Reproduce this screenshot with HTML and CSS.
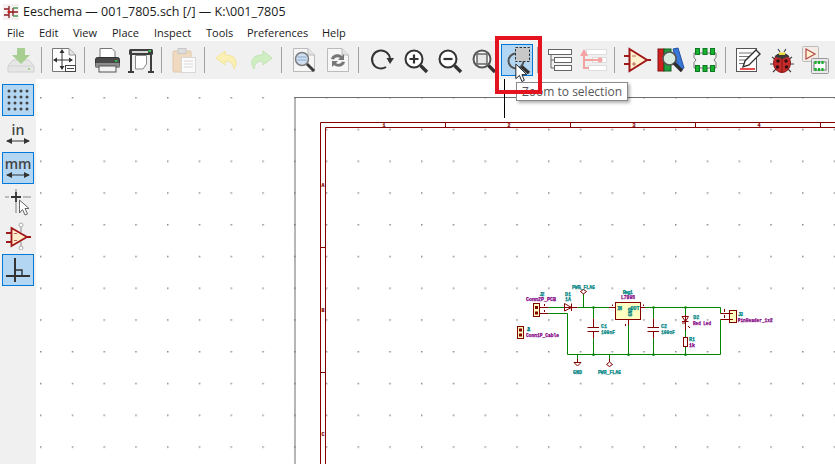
FILE: index.html
```html
<!DOCTYPE html>
<html>
<head>
	<meta charset="UTF-8">
	<title>Eeschema</title>
	<link rel="stylesheet" href="styles.css">
</head>

<body>
<div class="window">
	<div class="titlebar">
		<svg class="appicon" width="16" height="16" viewBox="0 0 16 16">
			<rect x="0" y="0" width="16" height="16" fill="#f6f0f0"/>
			<path d="M6 2V14M6 5H1M6 11H1M6 8H15M10 4V12" stroke="#8a1c1c" stroke-width="1.300" fill="none"/>
			<path d="M10 4H15M10 12H15" stroke="#4c9a56" stroke-width="1.300"/>
			<circle cx="6" cy="8" r="1.600" fill="#c02020"/>
		</svg>
		<span>Eeschema — 001_7805.sch [/] — K:\001_7805</span>
	</div>

	<div class="menubar">
		<span class="menu">File</span>
		<span class="menu">Edit</span>
		<span class="menu">View</span>
		<span class="menu">Place</span>
		<span class="menu">Inspect</span>
		<span class="menu">Tools</span>
		<span class="menu">Preferences</span>
		<span class="menu">Help</span>
	</div>

	<div class="toolbar">
		<!-- save -->
		<div class="tool"><svg width="28" height="28" viewBox="0 0 28 28">
			<path d="M6 14L1 20V26H27V20L22 14Z" fill="#e6e6e6" stroke="#d0d0d0"/>
			<path d="M1 20H27" stroke="#d4d4d4"/>
			<path d="M10 2H18V9H23L14 18L5 9H10Z" fill="#a8cf92"/>
			<rect x="21" y="22" width="2" height="2" fill="#a8cf92"/>
		</svg></div>
		<div class="sep"></div>
		<!-- page settings -->
		<div class="tool"><svg width="28" height="28" viewBox="0 0 28 28">
			<path d="M2.500 2.500H19L25.500 9V25.500H2.500Z" fill="#fff" stroke="#777"/>
			<path d="M19 2.500V9H25.500" fill="#e4e4e4" stroke="#999"/>
			<path d="M12 4V23M4 14H22" stroke="#333"/>
			<path d="M12 3L9.500 7H14.500ZM12 24L9.500 20H14.500ZM3 14L7 11.500V16.500ZM23 14L19 11.500V16.500Z" fill="#333"/>
			<rect x="15.500" y="19.500" width="10" height="6" fill="#fff" stroke="#444"/>
			<path d="M17 22.500H24" stroke="#444"/>
		</svg></div>
		<div class="sep"></div>
		<!-- print -->
		<div class="tool"><svg width="28" height="28" viewBox="0 0 28 28">
			<path d="M7 2.500H19L22 5.500V12H7Z" fill="#fff" stroke="#777"/>
			<rect x="2.500" y="11.500" width="24" height="10" rx="2" fill="#4a4a4a" stroke="#333"/>
			<rect x="2.500" y="17" width="24" height="5" fill="#8c8c8c"/>
			<rect x="6" y="20" width="17" height="6" fill="#f2f2f2" stroke="#555"/>
			<rect x="22" y="14" width="2.500" height="2" fill="#2fb04a"/>
		</svg></div>
		<!-- plotter -->
		<div class="tool"><svg width="28" height="28" viewBox="0 0 28 28">
			<rect x="2" y="3" width="24" height="6" rx="1.500" fill="#3e3e3e"/>
			<rect x="5" y="5" width="16" height="2" fill="#d8d8d8"/>
			<rect x="21.500" y="4" width="2.500" height="2" fill="#35c04f"/>
			<path d="M4 9V25M24 9V25" stroke="#3e3e3e" stroke-width="2"/>
			<path d="M1 26H7M21 26H27" stroke="#3e3e3e" stroke-width="2"/>
			<path d="M8.500 9.500H19.500V18L16 23H8.500Z" fill="#fff" stroke="#888"/>
		</svg></div>
		<div class="sep"></div>
		<!-- paste -->
		<div class="tool"><svg width="28" height="28" viewBox="0 0 28 28">
			<rect x="3" y="5" width="18" height="21" rx="1" fill="#efd9bf" stroke="#e0c8ac"/>
			<rect x="8" y="2.500" width="8" height="5" fill="#dedede" stroke="#c8c8c8"/>
			<rect x="11.500" y="11.500" width="14" height="15" fill="#fbfbfb" stroke="#d8d8d8"/>
			<path d="M14 15H23M14 18H23M14 21H23" stroke="#d8d8d8"/>
		</svg></div>
		<div class="sep"></div>
		<!-- undo -->
		<div class="tool"><svg width="28" height="28" viewBox="0 0 28 28">
			<path d="M12 5L3 12L12 19V15C17 15 20 16 21 23C25 17 24 9 12 9Z" fill="#fbf0b4" stroke="#f2e49a"/>
		</svg></div>
		<!-- redo -->
		<div class="tool"><svg width="28" height="28" viewBox="0 0 28 28">
			<path d="M16 5L25 12L16 19V15C11 15 8 16 7 23C3 17 4 9 16 9Z" fill="#cfeec2" stroke="#bfe3b0"/>
		</svg></div>
		<div class="sep"></div>
		<!-- find -->
		<div class="tool"><svg width="28" height="28" viewBox="0 0 28 28">
			<path d="M3.500 2.500H18L24.500 9V25.500H3.500Z" fill="#f6f6f6" stroke="#bbb"/>
			<path d="M18 2.500V9H24.500" fill="#e4e4e4" stroke="#bbb"/>
			<circle cx="12" cy="13" r="6.500" fill="#cfe0f2" stroke="#7d7d7d" stroke-width="1.500"/>
			<path d="M7.500 11H16.500M7.500 14H16.500" stroke="#8aa6c8"/>
			<path d="M17 18L24 25" stroke="#3c3c3c" stroke-width="3"/>
		</svg></div>
		<!-- find and replace -->
		<div class="tool"><svg width="28" height="28" viewBox="0 0 28 28">
			<path d="M3.500 2.500H18L24.500 9V25.500H3.500Z" fill="#f6f6f6" stroke="#bbb"/>
			<path d="M18 2.500V9H24.500" fill="#e4e4e4" stroke="#bbb"/>
			<path d="M7 13C8 8 15 7 18 10L20 8V14H14L16 12C14 10.500 11 11 10 13.500Z" fill="#777"/>
			<path d="M21 16C20 21 13 22 10 19L8 21V15H14L12 17C14 18.500 17 18 18 15.500Z" fill="#777"/>
		</svg></div>
		<div class="sep"></div>
		<!-- redraw -->
		<div class="tool"><svg width="28" height="28" viewBox="0 0 28 28">
			<path d="M19 21A9 9 0 1 1 23 13" fill="none" stroke="#333" stroke-width="2"/>
			<path d="M19.500 12H27L23 18Z" fill="#333"/>
		</svg></div>
		<!-- zoom in -->
		<div class="tool"><svg width="28" height="28" viewBox="0 0 28 28">
			<circle cx="13" cy="13" r="8.500" fill="#fff" stroke="#333" stroke-width="2"/>
			<path d="M8.500 13H17.500M13 8.500V17.500" stroke="#333" stroke-width="2.200"/>
			<path d="M19.500 19.500L26 26" stroke="#333" stroke-width="3.400"/>
		</svg></div>
		<!-- zoom out -->
		<div class="tool"><svg width="28" height="28" viewBox="0 0 28 28">
			<circle cx="13" cy="13" r="8.500" fill="#fff" stroke="#333" stroke-width="2"/>
			<path d="M8.500 13H17.500" stroke="#333" stroke-width="2.200"/>
			<path d="M19.500 19.500L26 26" stroke="#333" stroke-width="3.400"/>
		</svg></div>
		<!-- zoom fit -->
		<div class="tool"><svg width="28" height="28" viewBox="0 0 28 28">
			<circle cx="13" cy="13" r="8.500" fill="#fff" stroke="#555" stroke-width="2"/>
			<rect x="8" y="8" width="10" height="10" fill="#e8e8e8" stroke="#666" stroke-width="1.500"/>
			<path d="M19.500 19.500L26 26" stroke="#333" stroke-width="3.400"/>
		</svg></div>
		<!-- zoom to selection -->
		<div class="tool tool-on"><svg width="28" height="28" viewBox="0 0 28 28">
			<circle cx="13" cy="15" r="7.500" fill="none" stroke="#555" stroke-width="2"/>
			<rect x="12.500" y="1.500" width="14" height="14" fill="#c8c8c8" stroke="#333" stroke-dasharray="2.500 1.500"/>
			<path d="M18.500 20.500L26 27" stroke="#333" stroke-width="3.400"/>
		</svg></div>
		<div class="sep"></div>
		<!-- hierarchy -->
		<div class="tool"><svg width="28" height="28" viewBox="0 0 28 28">
			<rect x="2.500" y="3.500" width="23" height="5" fill="#fff" stroke="#666"/>
			<rect x="8.500" y="11.500" width="17" height="5" fill="#fff" stroke="#666"/>
			<rect x="8.500" y="19.500" width="17" height="5" fill="#fff" stroke="#666"/>
			<path d="M5 9V22H9M5 14H9" fill="none" stroke="#666"/>
		</svg></div>
		<!-- leave sheet -->
		<div class="tool"><svg width="28" height="28" viewBox="0 0 28 28">
			<rect x="6.500" y="3.500" width="20" height="5" fill="#fff" stroke="#ddd"/>
			<rect x="12.500" y="11.500" width="14" height="5" fill="#fff" stroke="#ddd"/>
			<rect x="8.500" y="19.500" width="18" height="5" fill="#fff" stroke="#ddd"/>
			<path d="M4 4V14H21M4 14V22H9" fill="none" stroke="#f4a3a3" stroke-width="2"/>
			<path d="M4 3L0 10H8Z" fill="#f4a3a3"/>
			<circle cx="20" cy="14" r="2.500" fill="#f4a3a3"/>
		</svg></div>
		<div class="sep"></div>
		<!-- symbol editor -->
		<div class="tool"><svg width="28" height="28" viewBox="0 0 28 28">
			<path d="M6.500 3L24 14L6.500 25Z" fill="#fff3cf" stroke="#a01818" stroke-width="2"/>
			<path d="M1 10H6M1 18H6M24 14H28" stroke="#a01818" stroke-width="2"/>
			<path d="M9 10H13M9 18H13M11 16V20" stroke="#c06060"/>
		</svg></div>
		<!-- library browser -->
		<div class="tool"><svg width="28" height="28" viewBox="0 0 28 28">
			<rect x="1" y="3" width="6" height="22" fill="#d02020" stroke="#801010"/>
			<rect x="7" y="3" width="7" height="22" fill="#20a040" stroke="#106020"/>
			<path d="M16 3L21 2L27 22L22 24Z" fill="#3878d8" stroke="#2050a0"/>
			<circle cx="12.500" cy="12.500" r="6.500" fill="#d8ece0" stroke="#555" stroke-width="1.500"/>
			<path d="M17 17L25 25" stroke="#2e2e2e" stroke-width="3.400"/>
		</svg></div>
		<!-- footprint editor -->
		<div class="tool"><svg width="28" height="28" viewBox="0 0 28 28">
			<path d="M3 7H25V11.500L23 14L25 16.500V22H3V16.500L5 14L3 11.500Z" fill="#f4f4f4" stroke="#777"/>
			<g fill="#18b030" stroke="#0c7a1e">
				<rect x="4.500" y="2.500" width="4" height="6"/>
				<rect x="12" y="2.500" width="4" height="6"/>
				<rect x="19.500" y="2.500" width="4" height="6"/>
				<rect x="4.500" y="19.500" width="4" height="6"/>
				<rect x="12" y="19.500" width="4" height="6"/>
				<rect x="19.500" y="19.500" width="4" height="6"/>
			</g>
		</svg></div>
		<div class="sep"></div>
		<!-- schematic fields / notes -->
		<div class="tool"><svg width="28" height="28" viewBox="0 0 28 28">
			<rect x="2.500" y="2.500" width="20" height="23" fill="#fff" stroke="#555"/>
			<path d="M5 7H18M5 10.500H16M5 14H14M5 17.500H11" stroke="#777"/>
			<path d="M6 23H21" stroke="#e01010" stroke-width="1.500"/>
			<path d="M9 21L11 15L22 4L26 8L15 19Z" fill="#fff" stroke="#333" stroke-width="1.400"/>
		</svg></div>
		<!-- erc bug -->
		<div class="tool"><svg width="28" height="28" viewBox="0 0 28 28">
			<path d="M4 11L8 14M24 11L20 14M2 18H7M26 18H21M5 26L9 22M23 26L19 22M10 3L12 6M18 3L16 6" stroke="#444" stroke-width="1.200"/>
			<ellipse cx="14" cy="17" rx="8.500" ry="9.500" fill="#c62a2a" stroke="#8a1818"/>
			<path d="M6.500 10.500C9 6 19 6 21.500 10.500L14 13Z" fill="#3a3a3a"/>
			<rect x="11" y="6.500" width="6" height="2.500" fill="#e8d838"/>
			<path d="M14 12V26.500" stroke="#7a1414"/>
			<g fill="#301010"><circle cx="10" cy="15" r="1.800"/><circle cx="18" cy="15" r="1.800"/><circle cx="9.500" cy="21" r="1.800"/><circle cx="18.500" cy="21" r="1.800"/></g>
		</svg></div>
		<!-- symbol to footprint -->
		<div class="tool"><svg width="28" height="28" viewBox="0 0 28 28">
			<rect x="0.500" y="0.500" width="16" height="15" rx="1" fill="#f4ece4" stroke="#bbb"/>
			<path d="M4 3L13 8L4 13Z" fill="#fff3cf" stroke="#b04848" stroke-width="1.200"/>
			<rect x="9.500" y="12.500" width="17" height="15" rx="1" fill="#e8e8e8" stroke="#999"/>
			<rect x="12" y="16" width="12" height="8" fill="#fff" stroke="#777"/>
			<path d="M13.500 15V18M17 15V18M20.500 15V18M13.500 22V25M17 22V25M20.500 22V25" stroke="#18b030" stroke-width="2.200"/>
		</svg></div>
	</div>

	<div class="workspace">
		<div class="sidebar">
			<div class="tool tool-on"><svg width="28" height="28" viewBox="0 0 28 28">
				<g fill="#444">
					<circle cx="5" cy="5" r="1.500"/><circle cx="11" cy="5" r="1.500"/><circle cx="17" cy="5" r="1.500"/><circle cx="23" cy="5" r="1.500"/>
					<circle cx="5" cy="11" r="1.500"/><circle cx="11" cy="11" r="1.500"/><circle cx="17" cy="11" r="1.500"/><circle cx="23" cy="11" r="1.500"/>
					<circle cx="5" cy="17" r="1.500"/><circle cx="11" cy="17" r="1.500"/><circle cx="17" cy="17" r="1.500"/><circle cx="23" cy="17" r="1.500"/>
					<circle cx="5" cy="23" r="1.500"/><circle cx="11" cy="23" r="1.500"/><circle cx="17" cy="23" r="1.500"/><circle cx="23" cy="23" r="1.500"/>
				</g>
			</svg></div>
			<div class="tool"><svg width="28" height="28" viewBox="0 0 28 28">
				<text class="unit" x="14" y="15" text-anchor="middle">in</text>
				<path d="M3 21H25" stroke="#333"/>
				<path d="M2 21L8 18V24ZM26 21L20 18V24Z" fill="#333"/>
			</svg></div>
			<div class="tool tool-on"><svg width="28" height="28" viewBox="0 0 28 28">
				<text class="unit" x="14" y="15" text-anchor="middle">mm</text>
				<path d="M3 21H25" stroke="#333"/>
				<path d="M2 21L8 18V24ZM26 21L20 18V24Z" fill="#333"/>
			</svg></div>
			<div class="tool"><svg width="28" height="28" viewBox="0 0 28 28">
				<path d="M12 1V5M1 9H5M19 9H27M12 13V25" stroke="#aaa" stroke-width="1.600"/>
				<path d="M12 4V14M7 9H17" stroke="#333" stroke-width="1.800"/>
				<path d="M15.500 12V25L18.500 21.500L21 27L23.500 26L21 20.500H25Z" fill="#fff" stroke="#666"/>
			</svg></div>
			<div class="tool"><svg width="28" height="28" viewBox="0 0 28 28">
				<path d="M7.500 6L23 15L7.500 24Z" fill="#ffeccb" stroke="#a01818" stroke-width="1.800"/>
				<path d="M2 11H7M2 20H7M23 15H27" stroke="#a01818" stroke-width="1.800"/>
				<path d="M10 11.500H13M10 18.500H13" stroke="#c06060"/>
				<path d="M17 4V10M17 20V27" stroke="#aaa" stroke-width="1.400"/>
				<circle cx="17" cy="3" r="2" fill="#fff" stroke="#aaa"/>
				<circle cx="17" cy="26" r="2" fill="#fff" stroke="#aaa"/>
			</svg></div>
			<div class="tool tool-on"><svg width="28" height="28" viewBox="0 0 28 28">
				<path d="M11 2V26M2 20H26" stroke="#333" stroke-width="2"/>
				<path d="M11 14H18V20" fill="none" stroke="#333" stroke-width="1.400"/>
			</svg></div>
		</div>

		<div class="canvas">
			<svg class="sheet" width="799" height="385" viewBox="36 79 799 385">
				<defs>
					<pattern id="grid" patternUnits="userSpaceOnUse" x="40" y="97" width="31.75" height="31.75">
						<rect width="1.500" height="1.500" fill="#8a8a8a"/>
					</pattern>
				</defs>
				<rect x="36" y="79" width="799" height="385" fill="url(#grid)"/>

				<!-- drawing sheet -->
				<path class="page" d="M295 464V97.500H835"/>
				<path class="frame" d="M320.500 464V122.500H835M325.500 464V127.500H835"/>
				<path class="tick" d="M445.500 122V127M570.500 122V127M695.500 122V127M820.500 122V127M321 247.500H326M321 372.500H326"/>
				<text class="frametext" x="384" y="126.500" text-anchor="middle">1</text>
				<text class="frametext" x="509" y="126.500" text-anchor="middle">2</text>
				<text class="frametext" x="634" y="126.500" text-anchor="middle">3</text>
				<text class="frametext" x="759" y="126.500" text-anchor="middle">4</text>
				<text class="frametext" x="323" y="187" text-anchor="middle">A</text>
				<text class="frametext" x="323" y="312" text-anchor="middle">B</text>
				<text class="frametext" x="323" y="436" text-anchor="middle">C</text>

				<!-- wires -->
				<path class="wire" d="M548.500 307.500H564.500M577.500 307.500H615M583.500 307.500V293.500M548.500 313.500H567.500V354.500H720.500V319.500M640.500 307.500H720.500V313.500"/>
				<path class="wire" d="M593.500 307.500V318.500M593.500 338.500V354.500M653.500 307.500V318.500M653.500 338.500V354.500M685.500 307.500V315M685.500 330V337.500M685.500 346.500V354.500M628.500 325V354.500M577.500 354.500V359M609.500 354.500V359"/>
				<g class="dots">
					<circle cx="593.500" cy="307.500" r="1.300"/><circle cx="653.500" cy="307.500" r="1.300"/><circle cx="685.500" cy="307.500" r="1.300"/>
					<circle cx="593.500" cy="354.800" r="1.300"/><circle cx="628.500" cy="354.800" r="1.300"/><circle cx="653.500" cy="354.800" r="1.300"/><circle cx="685.500" cy="354.800" r="1.300"/>
				</g>

				<!-- J2 -->
				<rect class="body" x="533.500" y="303.500" width="6" height="13"/>
				<rect class="pad" x="535" y="306" width="3" height="3"/>
				<rect class="pad" x="535" y="311.500" width="3" height="3"/>
				<path class="pin" d="M539 307.500H548.500M539 313.500H548.500M544.500 306V304M544.500 312V310"/>
				<text class="ref" x="539.500" y="295.500" textLength="5">J2</text>
				<text class="val" x="526" y="301" textLength="30" lengthAdjust="spacingAndGlyphs">Conn2P_PCB</text>

				<!-- J1 -->
				<rect class="body" x="517.500" y="326.500" width="6" height="12"/>
				<rect class="pad" x="519" y="328.500" width="3" height="3"/>
				<rect class="pad" x="519" y="333.500" width="3" height="3"/>
				<text class="ref" x="526.500" y="331" textLength="4">J1</text>
				<text class="val" x="526" y="337" textLength="33" lengthAdjust="spacingAndGlyphs">Conn1P_Cable</text>

				<!-- D1 -->
				<path class="pin" d="M564.500 307.500H577.500M571.500 303.500V311"/>
				<path class="part" d="M564.500 303.500V311L571.500 307.500Z"/>
				<text class="ref" x="565" y="295.500" textLength="6">D1</text>
				<text class="ref" x="565" y="301" textLength="6">1A</text>

				<!-- PWR_FLAG top -->
				<path class="part" d="M583.500 294L580.500 291.500L583.500 289.500L586.500 291.500Z"/>
				<text class="ref" x="572" y="288.500" textLength="23" lengthAdjust="spacingAndGlyphs">PWR_FLAG</text>

				<!-- C1 -->
				<path class="pin" d="M593.500 318.500V327.500M593.500 331.500V338.500"/>
				<path class="plate" d="M587.500 327.500H599M587.500 331.500H599"/>
				<text class="ref" x="601" y="327.500" textLength="6">C1</text>
				<text class="ref" x="601" y="334" textLength="14" lengthAdjust="spacingAndGlyphs">100nF</text>

				<!-- regulator -->
				<rect class="body" x="615.500" y="302.500" width="25" height="17"/>
				<path class="pin" d="M609 307.500H615.500M640.500 307.500H645M628.500 319.700V325M612.500 304.500V306M643.500 304.500V306M625.500 324V326"/>
				<text class="ref" x="617" y="310" textLength="5">IN</text>
				<text class="ref" x="630.500" y="310" textLength="9">OUT</text>
				<text class="ref" x="630" y="318" text-anchor="middle" transform="rotate(-90 628 314)">GND</text>
				<text class="ref" x="622.700" y="293.500" textLength="10">Reg1</text>
				<text class="val" x="621" y="299" textLength="14" lengthAdjust="spacingAndGlyphs">L7805</text>

				<!-- C2 -->
				<path class="pin" d="M653.500 318.500V327.500M653.500 331.500V338.500"/>
				<path class="plate" d="M647.500 327.500H659M647.500 331.500H659"/>
				<text class="ref" x="661" y="327.500" textLength="6">C2</text>
				<text class="ref" x="661" y="334" textLength="14" lengthAdjust="spacingAndGlyphs">100nF</text>

				<!-- D2 and R1 -->
				<path class="pin" d="M685.500 315V330M682 323L685.500 323M688 326L690 328"/>
				<path class="part" d="M682 316.500H688.500L685.500 321.500ZM682 321.500H688.500"/>
				<rect class="part" x="683.500" y="337.500" width="4" height="9"/>
				<text class="ref" x="693.300" y="319" textLength="6">D2</text>
				<text class="val" x="693" y="325" textLength="18" lengthAdjust="spacingAndGlyphs">Red Led</text>
				<text class="ref" x="689" y="340.500" textLength="6">R1</text>
				<text class="val" x="689" y="346.500" textLength="6">1k</text>

				<!-- J3 -->
				<rect class="body" x="729.500" y="310.500" width="7" height="12"/>
				<path class="pin" d="M720.500 313.500H733M720.500 319.500H733M724.500 309V312M724.500 315V318"/>
				<text class="ref" x="738" y="316" textLength="5">J3</text>
				<text class="val" x="737.700" y="321.500" textLength="35" lengthAdjust="spacingAndGlyphs">PinHeader_1x2</text>

				<!-- power symbols -->
				<path class="pin" d="M577.500 359V362M609.500 359V362"/>
				<path class="part" d="M574 362.500H581L577.500 366Z"/>
				<path class="part" d="M609.500 362L606.500 364.500L609.500 366.500L612.500 364.500Z"/>
				<text class="ref" x="573" y="373.500" textLength="9">GND</text>
				<text class="ref" x="598" y="373.500" textLength="23" lengthAdjust="spacingAndGlyphs">PWR_FLAG</text>

				<!-- crosshair -->
				<path class="cross" d="M504.500 79V118"/>
			</svg>
		</div>
	</div>

	<!-- things lying over the window -->
	<div class="tooltip">Zoom to selection</div>
	<div class="callout"></div>
	<svg class="pointer" width="13" height="20" viewBox="0 0 16 24">
		<path d="M1 1V19L5.500 15L8.500 22.500L11.500 21L8.500 14H14.500Z" fill="#fff" stroke="#222" stroke-width="1.200"/>
	</svg>
</div>
</body>
</html>
```

FILE: styles.css
```css
html, body {
	margin: 0;
	padding: 0;
	background: #fff;
}
.window {
	position: relative;
	width: 835px;
	height: 464px;
	overflow: hidden;
	display: flex;
	flex-direction: column;
	font-family: "Open Sans", "Noto Sans", sans-serif;
	font-size: 11px;
	color: #1a1a1a;
}
.titlebar {
	height: 23px;
	display: flex;
	align-items: center;
	gap: 4px;
	padding-left: 3px;
	font-size: 12.5px;
	white-space: nowrap;
}
.menubar {
	height: 18px;
	display: flex;
	align-items: center;
	padding-left: 7px;
}
.menu:nth-child(1) { width: 32px; }
.menu:nth-child(2) { width: 34px; }
.menu:nth-child(3) { width: 39px; }
.menu:nth-child(4) { width: 42px; }
.menu:nth-child(5) { width: 52px; }
.menu:nth-child(6) { width: 41px; }
.menu:nth-child(7) { width: 75px; }

.toolbar {
	height: 38px;
	box-sizing: border-box;
	background: #f0f0f0;
	display: flex;
	align-items: center;
	padding-left: 5px;
}
.tool {
	box-sizing: border-box;
	width: 32px;
	height: 32px;
	margin-right: 2px;
	flex: none;
	display: flex;
	align-items: center;
	justify-content: center;
	border: 1px solid transparent;
}
.tool-on {
	background: #b3d7f3;
	border-color: #0078d7;
}
.sep {
	flex: none;
	width: 1px;
	height: 26px;
	margin: 0 6px 0 2px;
	background: #a0a0a0;
}

.workspace {
	flex: 1;
	display: flex;
	min-height: 0;
}
.sidebar {
	width: 36px;
	flex: none;
	box-sizing: border-box;
	background: #f0f0f0;
	padding: 5px 0 0 2px;
	display: flex;
	flex-direction: column;
	gap: 2px;
}
.sidebar .tool {
	margin-right: 0;
}
.unit {
	font-family: "Open Sans", sans-serif;
	font-size: 14px;
	font-weight: 600;
	fill: #444;
}
.canvas {
	flex: 1;
	min-width: 0;
	background: #fff;
}
.sheet {
	display: block;
}

.page { fill: none; stroke: #6e6e6e; stroke-width: 1; }
.frame { fill: none; stroke: #840000; stroke-width: 1; }
.tick { fill: none; stroke: #840000; stroke-width: 1; }
.frametext { font-family: "Liberation Mono", monospace; font-size: 5px; font-weight: bold; fill: #840000; stroke: #840000; stroke-width: 0.2; }
.wire { fill: none; stroke: #008400; stroke-width: 1; }
.dots { fill: #008400; }
.pin { fill: none; stroke: #840000; stroke-width: 1; }
.plate { fill: none; stroke: #840000; stroke-width: 1; }
.part { fill: none; stroke: #840000; stroke-width: 1; }
.body { fill: #ffffc2; stroke: #840000; stroke-width: 1; }
.pad { fill: #840000; }
.ref { font-family: "Liberation Mono", monospace; font-size: 5px; font-weight: bold; fill: #008484; stroke: #008484; stroke-width: 0.25; }
.val { font-family: "Liberation Mono", monospace; font-size: 5px; font-weight: bold; fill: #840084; stroke: #840084; stroke-width: 0.25; }
.cross { stroke: #000; stroke-width: 1; }

.tooltip {
	position: absolute;
	left: 516px;
	top: 82px;
	padding: 0 5px;
	height: 17px;
	line-height: 17px;
	background: #fff;
	border: 1px solid #8a8a8a;
	box-shadow: 2px 2px 3px rgba(0, 0, 0, 0.3);
	font-size: 12px;
	color: #575757;
	white-space: nowrap;
}
.callout {
	position: absolute;
	left: 495px;
	top: 36px;
	width: 47px;
	height: 58px;
	box-sizing: border-box;
	border: 4px solid #e3141f;
}
.pointer {
	position: absolute;
	left: 515px;
	top: 63px;
}
```
